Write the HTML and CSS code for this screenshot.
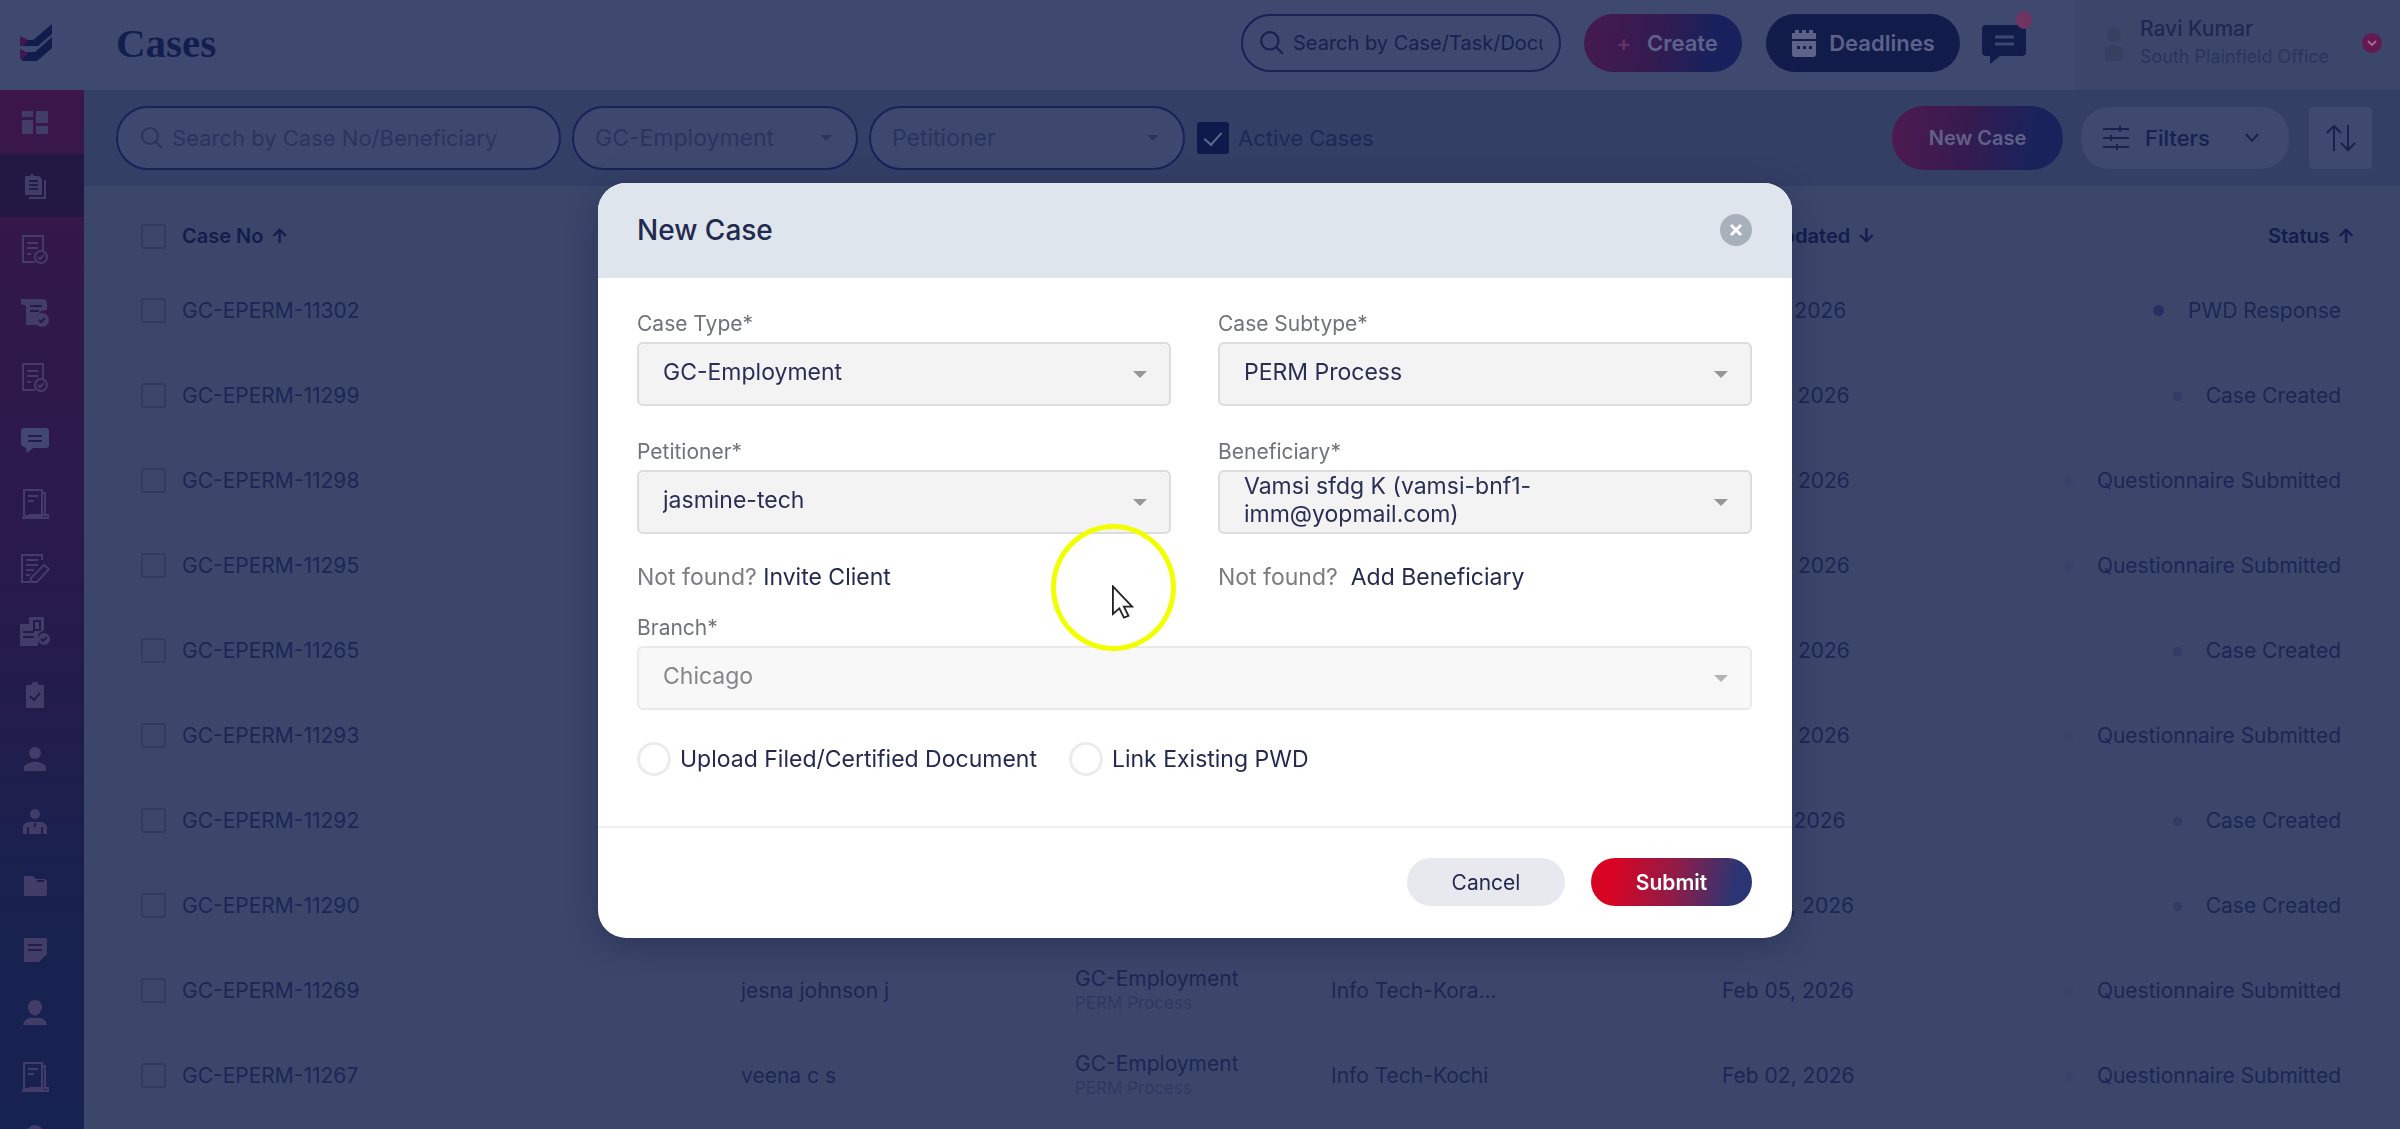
FILE: index.html
```html
<!DOCTYPE html>
<html lang="en">
<head>
    <meta charset="UTF-8">
    <meta name="viewport" content="width=device-width, initial-scale=1.0">
    <title>Cases</title>
    <link rel="stylesheet" href="styles.css">
</head>
<body>
    <!-- shared icons -->
    <svg class="sprite" aria-hidden="true">
        <symbol id="i-search" viewBox="0 0 24 24"><circle cx="10" cy="10" r="8"/><path d="M16 16l6 6"/></symbol>
        <symbol id="i-report" viewBox="0 0 28 32"><path d="M3 2h18v26H3zM21 5h3v23M1 30h26v-3H8M7 8h10M7 13h6"/></symbol>
        <symbol id="i-doccheck" viewBox="0 0 28 32"><path d="M14 29H2V3h20v15M6 10h11M6 15h11M6 21h4"/><circle cx="20" cy="24" r="6"/><path d="M17 24l2 2 4-4"/></symbol>
    </svg>

    <header class="topbar">
        <a class="logo" href="#" aria-label="Home">
            <svg width="32" height="38" viewBox="0 0 32 38">
                <path fill="#111c4b" d="M4 16h9L32 0v10L18 22H0zM4 28h11L32 13v11L17 37H3l-3-3z"/>
                <path fill="#40164f" d="M0 12l8 4-4 6H0zM0 25l8 4-5 6-3-1z"/>
            </svg>
        </a>
        <h1>Cases</h1>
        <label class="pill global-search">
            <svg class="line" width="26" height="26"><use href="#i-search"/></svg>
            <input type="text" aria-label="Search" placeholder="Search by Case/Task/Document">
        </label>
        <button class="btn create"><span class="plus">+</span>Create</button>
        <button class="btn deadlines">
            <svg width="26" height="28" viewBox="0 0 26 28" fill="currentColor"><path d="M4 1h4v3h3V1h4v3h3V1h4v3h3v6H1V4h3zM1 12h24v13q0 3-3 3H4q-3 0-3-3zm5 5v3h3v-3zm6 0v3h3v-3zm6 0v3h3v-3z" fill-rule="evenodd"/></svg>
            Deadlines
        </button>
        <button class="chat" aria-label="Messages">
            <svg width="44" height="40" viewBox="0 0 44 40"><path fill="#111c4b" d="M4 0h36q4 0 4 4v23q0 4-4 4H18L8 39v-8H4q-4 0-4-4V4q0-4 4-4z"/><path stroke="#3f496f" stroke-width="3" d="M13 12h19M13 19h19"/></svg>
            <span class="dot"></span>
        </button>
        <div class="profile">
            <svg width="40" height="44" viewBox="0 0 40 44" fill="#36415f"><circle cx="22" cy="14" r="7"/><path d="M13 40V28q9-8 18 0v12z"/></svg>
            <div class="who">
                <strong>Ravi Kumar</strong>
                <span>South Plainfield Office</span>
            </div>
            <button class="profile-toggle" aria-label="Account menu">
                <svg width="10" height="6" viewBox="0 0 10 6"><path d="M1 1l4 4 4-4" fill="none" stroke="#a5678f" stroke-width="2"/></svg>
            </button>
        </div>
    </header>

    <div class="shell">
        <nav class="sidebar">
            <a href="#" aria-label="Dashboard"><svg class="solid" width="28" height="28" viewBox="0 0 28 28"><path d="M1 3h11v6H1zM1 12h11v14H1zM15 3h12v12H15zM15 18h12v8H15z"/></svg></a>
            <a href="#" class="active" aria-label="Cases"><svg class="solid" width="24" height="28" viewBox="0 0 24 28"><path d="M2 4h5l2-3 2 3h5l3 3v16H2z"/><path class="cut" d="M6 9h9M6 13h9M6 17h9"/><path class="edge" d="M22 8v18H6"/></svg></a>
            <a href="#" aria-label="Tasks"><svg class="line" width="28" height="32"><use href="#i-doccheck"/></svg></a>
            <a href="#" aria-label="Petitions"><svg class="solid" width="28" height="32" viewBox="0 0 28 32"><path d="M0 2h22q4 0 4 5v6l-6 1-5 6 1 8H5V9L0 7z"/><circle cx="21" cy="23" r="7"/><path class="cut" d="M9 9h12M9 14h9M18 23l2 2 4-4"/></svg></a>
            <a href="#" aria-label="Approvals"><svg class="line" width="28" height="32"><use href="#i-doccheck"/></svg></a>
            <a href="#" aria-label="Messages"><svg class="solid bright" width="28" height="26" viewBox="0 0 28 26"><path d="M3 1h22q3 0 3 3v14q0 3-3 3H12l-6 5-1-5-5-3V4q0-3 3-3z"/><path class="cut" d="M7 9h14M7 14h14"/></svg></a>
            <a href="#" aria-label="Reports"><svg class="line" width="28" height="32"><use href="#i-report"/></svg></a>
            <a href="#" aria-label="Drafts"><svg class="line" width="30" height="32" viewBox="0 0 30 32"><path d="M22 8V3H2v27h15l12-13-5-4-13 13-1 4M6 8h12M6 13h12M6 18h8M6 23h4"/></svg></a>
            <a href="#" aria-label="Verification"><svg class="solid" width="32" height="32" viewBox="0 0 32 32"><path d="M10 2h15v13l-6 4v12H1V9h9z"/><circle cx="25" cy="24" r="6"/><path class="cut" d="M15 6h6v9h-6zM4 17h11M4 22h11M22 24l2 2 4-4"/></svg></a>
            <a href="#" aria-label="Checklist"><svg class="solid" width="22" height="26" viewBox="0 0 22 26"><path d="M2 3h5l2-3h4l2 3h5v23H2z"/><path class="cut" d="M6 14l4 4 6-7"/></svg></a>
            <a href="#" aria-label="Clients"><svg class="solid" width="24" height="26" viewBox="0 0 24 26"><circle cx="12" cy="7" r="6"/><path d="M1 25v-5q11-9 22 0v5z"/></svg></a>
            <a href="#" aria-label="Staff"><svg class="solid" width="24" height="26" viewBox="0 0 24 26"><circle cx="12" cy="5" r="5"/><path d="M0 25v-7q1-5 7-5h10q6 0 7 5v7z"/><path class="cut" d="M5 18v7M12 14v4M19 18v7"/></svg></a>
            <a href="#" aria-label="Files"><svg class="solid" width="24" height="22" viewBox="0 0 24 22"><path d="M1 1h9l3 3h8q3 0 3 3v12q0 2-2 2H1z"/><path class="cut" d="M14 6h7"/></svg></a>
            <a href="#" aria-label="Notes"><svg class="solid" width="24" height="26" viewBox="0 0 24 26"><path d="M1 1h23v16l-8 8H1z"/><path class="cut" d="M5 8h14M5 13h14"/></svg></a>
            <a href="#" aria-label="Users"><svg class="solid" width="24" height="28" viewBox="0 0 24 28"><path d="M5 9q0-8 7-8t7 8l-2 5-5 3-5-3z"/><path d="M0 26q2-9 12-7 10-2 12 7z"/></svg></a>
            <a href="#" aria-label="Billing"><svg class="line" width="28" height="32"><use href="#i-report"/></svg></a>
            <a href="#" class="last" aria-label="Settings"><svg class="solid" width="24" height="20" viewBox="0 0 24 20"><circle cx="12" cy="25" r="9"/></svg></a>
        </nav>

        <main>
            <div class="toolbar">
                <label class="pill case-search">
                    <svg class="line" width="24" height="24"><use href="#i-search"/></svg>
                    <input type="text" aria-label="Search cases" placeholder="Search by Case No/Beneficiary">
                </label>
                <div class="pill drop type-filter">
                    <select aria-label="Case type"><option>GC-Employment</option></select>
                </div>
                <div class="pill drop petitioner-filter">
                    <select aria-label="Petitioner"><option>Petitioner</option></select>
                </div>
                <label class="active-cases"><input type="checkbox" checked>Active Cases</label>
                <button class="btn new-case">New Case</button>
                <button class="filters">
                    <svg width="26" height="26" viewBox="0 0 26 26"><path d="M0 4h26M0 13h26M0 22h26M17 1v6M8 10v6M14 19v6"/></svg>
                    Filters
                    <svg class="chev" width="14" height="10" viewBox="0 0 14 10"><path d="M1 1l6 7 6-7"/></svg>
                </button>
                <button class="sort" aria-label="Sort">
                    <svg width="30" height="28" viewBox="0 0 30 28"><path d="M8 27V2M1 9l7-7 7 7M22 1v25M15 19l7 7 7-7"/></svg>
                </button>
            </div>

            <table>
                <thead>
                    <tr>
                        <th class="check"><input type="checkbox" aria-label="Select all"></th>
                        <th class="no">Case No <b>↑</b></th>
                        <th class="name"></th>
                        <th class="type"></th>
                        <th class="client"></th>
                        <th class="date">Last Updated <b>↓</b></th>
                        <th class="status">Status <b>↑</b></th>
                    </tr>
                </thead>
                <tbody>
                    <tr><td class="check"><input type="checkbox" aria-label="Select case"></td><td>GC-EPERM-11302</td><td></td><td></td><td></td><td>Feb 17, 2026</td><td class="status"><i class="strong"></i>PWD Response</td></tr>
                    <tr><td class="check"><input type="checkbox" aria-label="Select case"></td><td>GC-EPERM-11299</td><td></td><td></td><td></td><td>Feb 13, 2026</td><td class="status"><i></i>Case Created</td></tr>
                    <tr><td class="check"><input type="checkbox" aria-label="Select case"></td><td>GC-EPERM-11298</td><td></td><td></td><td></td><td>Feb 12, 2026</td><td class="status"><i class="faint"></i>Questionnaire Submitted</td></tr>
                    <tr><td class="check"><input type="checkbox" aria-label="Select case"></td><td>GC-EPERM-11295</td><td></td><td></td><td></td><td>Feb 12, 2026</td><td class="status"><i class="faint"></i>Questionnaire Submitted</td></tr>
                    <tr><td class="check"><input type="checkbox" aria-label="Select case"></td><td>GC-EPERM-11265</td><td></td><td></td><td></td><td>Feb 12, 2026</td><td class="status"><i></i>Case Created</td></tr>
                    <tr><td class="check"><input type="checkbox" aria-label="Select case"></td><td>GC-EPERM-11293</td><td></td><td></td><td></td><td>Feb 12, 2026</td><td class="status"><i class="faint"></i>Questionnaire Submitted</td></tr>
                    <tr><td class="check"><input type="checkbox" aria-label="Select case"></td><td>GC-EPERM-11292</td><td></td><td></td><td></td><td>Feb 11, 2026</td><td class="status"><i></i>Case Created</td></tr>
                    <tr><td class="check"><input type="checkbox" aria-label="Select case"></td><td>GC-EPERM-11290</td><td></td><td></td><td></td><td>Feb 06, 2026</td><td class="status"><i></i>Case Created</td></tr>
                    <tr><td class="check"><input type="checkbox" aria-label="Select case"></td><td>GC-EPERM-11269</td><td class="name">jesna johnson j</td><td>GC-Employment<small>PERM Process</small></td><td>Info Tech-Kora...</td><td>Feb 05, 2026</td><td class="status"><i class="faint"></i>Questionnaire Submitted</td></tr>
                    <tr><td class="check"><input type="checkbox" aria-label="Select case"></td><td>GC-EPERM-11267</td><td class="name">veena c s</td><td>GC-Employment<small>PERM Process</small></td><td>Info Tech-Kochi</td><td>Feb 02, 2026</td><td class="status"><i class="faint"></i>Questionnaire Submitted</td></tr>
                </tbody>
            </table>
        </main>
    </div>

    <div class="overlay">
        <form class="modal" role="dialog" aria-labelledby="modal-title">
            <div class="modal-head">
                <h2 id="modal-title">New Case</h2>
                <button type="button" class="close" aria-label="Close">
                    <svg width="14" height="14" viewBox="0 0 14 14"><path d="M2 2l10 10M12 2L2 12" stroke="#fff" stroke-width="3"/></svg>
                </button>
            </div>
            <div class="modal-body">
                <div class="grid">
                    <div class="field">
                        <label for="case-type">Case Type*</label>
                        <div class="drop"><select id="case-type"><option>GC-Employment</option></select></div>
                    </div>
                    <div class="field">
                        <label for="subtype">Case Subtype*</label>
                        <div class="drop"><select id="subtype"><option>PERM Process</option></select></div>
                    </div>
                    <div class="field">
                        <label for="petitioner">Petitioner*</label>
                        <div class="drop"><select id="petitioner"><option>jasmine-tech</option></select></div>
                        <p>Not found? <a href="#">Invite Client</a></p>
                    </div>
                    <div class="field">
                        <label for="beneficiary">Beneficiary*</label>
                        <div class="drop"><select id="beneficiary" class="two-line"><option>Vamsi sfdg K (vamsi-bnf1-imm@yopmail.com)</option></select></div>
                        <p>Not found? &nbsp;<a href="#">Add Beneficiary</a></p>
                    </div>
                </div>
                <div class="field branch">
                    <label for="branch">Branch*</label>
                    <div class="drop"><select id="branch" disabled><option>Chicago</option></select></div>
                </div>
                <div class="radios">
                    <label><input type="radio" name="doc">Upload Filed/Certified Document</label>
                    <label><input type="radio" name="doc">Link Existing PWD</label>
                </div>
            </div>
            <div class="modal-foot">
                <button type="button" class="cancel">Cancel</button>
                <button type="submit" class="submit">Submit</button>
            </div>
            <div class="pointer" aria-hidden="true">
                <svg width="22" height="34" viewBox="0 0 24 36"><path d="M1 1v30l7-6 5 10 5-2-5-10h9z" fill="#fff" stroke="#222" stroke-width="2"/></svg>
            </div>
        </form>
    </div>
</body>
</html>
```
FILE: styles.css
```css
* {
    box-sizing: border-box;
}
body {
    margin: 0;
    height: 100vh;
    display: flex;
    flex-direction: column;
    overflow: hidden;
    background: #3c466b;
    color: #16214f;
    font-family: Inter, "Liberation Sans", sans-serif;
    font-size: 21px;
}
button, input, select {
    font: inherit;
    color: inherit;
    margin: 0;
}
button {
    border: 0;
    padding: 0;
    background: none;
    cursor: pointer;
}
a {
    text-decoration: none;
}
.sprite {
    position: absolute;
    width: 0;
    height: 0;
}

/* top bar */
.topbar {
    flex: 0 0 90px;
    display: flex;
    align-items: center;
    padding-bottom: 5px;
    background: #3f496f;
}
.logo {
    width: 84px;
    padding-left: 20px;
}
.logo svg {
    display: block;
}
h1 {
    margin: 0 auto 0 32px;
    font-family: "Liberation Serif", serif;
    font-size: 41px;
    line-height: 48px;
    color: #131e50;
}
.pill {
    display: flex;
    align-items: center;
    border: 2px solid #17225a;
    border-radius: 32px;
}
.pill svg {
    flex: none;
    fill: none;
    stroke: currentColor;
    stroke-width: 2px;
}
.pill input, .pill select {
    width: 100%;
    min-width: 0;
    border: 0;
    outline: 0;
    padding: 0;
    background: none;
    appearance: none;
}
.pill input::placeholder {
    color: inherit;
    opacity: 1;
}
.global-search {
    width: 320px;
    height: 58px;
    padding: 0 16px;
    gap: 8px;
    font-size: 20px;
}
.btn {
    border-radius: 32px;
    color: #5e6289;
    font-weight: 600;
}
.topbar .btn {
    height: 58px;
    font-size: 22px;
}
.create {
    width: 158px;
    margin: 0 24px 0 23px;
    padding-left: 8px;
    background: linear-gradient(100deg, #421a50 10%, #341b50 45%, #18215c 80%);
}
.plus {
    margin-right: 16px;
    color: #6a3063;
}
.deadlines {
    width: 194px;
    display: flex;
    align-items: center;
    justify-content: center;
    gap: 12px;
    background: #111c4b;
}
.chat {
    position: relative;
    margin: 0 48px 0 22px;
    height: 36px;
}
.dot {
    position: absolute;
    top: -14px;
    right: -6px;
    width: 16px;
    height: 18px;
    border-radius: 50%;
    background: #71335f;
}
.profile {
    display: flex;
    align-items: center;
    align-self: stretch;
    width: 326px;
    padding: 0 18px;
    margin-bottom: -5px;
    padding-bottom: 5px;
    background: #3c466a;
}
.who {
    flex: 1;
    padding-left: 8px;
    white-space: nowrap;
}
.who strong, .who span {
    display: block;
    line-height: 28px;
}
.who strong {
    font-weight: 500;
    color: #1d2854;
}
.who span {
    font-size: 18px;
    color: #29345d;
}
.profile-toggle {
    display: grid;
    place-items: center;
    width: 20px;
    height: 20px;
    border-radius: 50%;
    background: #64194f;
}

/* side menu */
.shell {
    flex: 1;
    min-height: 0;
    display: flex;
}
.sidebar {
    flex: 0 0 84px;
    display: flex;
    flex-direction: column;
    overflow: hidden;
    background: linear-gradient(#3c164b, #30184a 22%, #2a194b 42%, #221c4b 58%, #18214e 78%, #162251);
}
.sidebar a {
    flex: 1;
    display: flex;
    align-items: center;
    justify-content: center;
    padding-right: 14px;
}
.sidebar a.active {
    background: #231744;
}
.sidebar a.last {
    flex: 0 0 20px;
}
.sidebar .line {
    fill: none;
    stroke: #433c69;
    stroke-width: 2px;
}
.sidebar .solid {
    fill: #423c69;
}
.sidebar .bright {
    fill: #414770;
}
.sidebar .cut {
    fill: none;
    stroke: #251b49;
    stroke-width: 2px;
}
.sidebar .edge {
    fill: none;
    stroke: #423c69;
    stroke-width: 2px;
}

/* filters row */
main {
    flex: 1;
    min-width: 0;
}
.toolbar {
    display: flex;
    align-items: center;
    height: 96px;
    padding: 0 28px 0 32px;
    background: #343f66;
}
.toolbar .pill {
    height: 64px;
    background: #3e486e;
    color: #29345f;
    font-size: 22px;
}
.case-search {
    width: 445px;
    padding: 0 22px;
    gap: 8px;
}
.drop {
    position: relative;
}
.drop::after {
    content: "";
    position: absolute;
    right: 24px;
    top: 29px;
    border: 7px solid transparent;
    border-top-color: currentColor;
    border-bottom: 0;
    pointer-events: none;
}
.toolbar .drop {
    margin-left: 11px;
    padding: 0 21px;
    font-size: 23px;
}
.toolbar .drop::after {
    top: 27px;
    border-width: 6px 6px 0;
}
.type-filter {
    width: 286px;
}
.petitioner-filter {
    width: 316px;
}
input[type="checkbox"] {
    appearance: none;
    display: block;
    width: 25px;
    height: 25px;
    border: 2px solid #303b63;
    border-radius: 3px;
}
.active-cases {
    display: flex;
    align-items: center;
    gap: 9px;
    margin: 0 auto 0 12px;
    font-size: 22px;
    color: #1d2857;
}
.active-cases input[type="checkbox"] {
    display: grid;
    place-items: center;
    width: 32px;
    height: 32px;
    border: 0;
    background: #0e1a4b;
}
.active-cases input::before {
    content: "";
    width: 8px;
    height: 15px;
    margin-top: -4px;
    border: solid #5f688c;
    border-width: 0 2px 2px 0;
    transform: rotate(42deg);
}
.new-case {
    width: 171px;
    height: 64px;
    font-size: 20px;
    background: linear-gradient(100deg, #4a1a50 8%, #351b50 45%, #1a225c 80%);
}
.filters {
    display: flex;
    align-items: center;
    width: 208px;
    height: 62px;
    margin: 0 20px 0 18px;
    padding: 0 30px 0 22px;
    gap: 16px;
    border-radius: 28px;
    background: #3f4970;
    font-size: 22px;
    font-weight: 500;
}
.filters svg, .sort svg {
    fill: none;
    stroke: #17224f;
    stroke-width: 2px;
}
.filters .chev {
    margin-left: auto;
}
.sort {
    display: grid;
    place-items: center;
    width: 63px;
    height: 62px;
    border-radius: 4px;
    background: #3f4970;
}

/* cases table */
table {
    width: 100%;
    border-collapse: collapse;
    table-layout: fixed;
    color: #1b2655;
}
th {
    height: 82px;
    font-weight: 600;
    font-size: 20px;
    color: #121d4c;
}
th b {
    font-weight: 700;
    margin-left: 2px;
}
td {
    height: 85px;
}
th, td {
    padding: 0;
    text-align: left;
    white-space: nowrap;
}
thead th {
    padding-top: 18px;
}
th.check {
    width: 98px;
}
.check {
    padding-left: 57px;
}
th.no {
    width: 559px;
}
th.name {
    width: 334px;
}
th.type {
    width: 256px;
}
th.client {
    width: 391px;
}
th.date {
    width: 240px;
}
td.status {
    padding-right: 59px;
    text-align: right;
}
th.status {
    padding-right: 45px;
    text-align: right;
}
.status i {
    display: inline-block;
    width: 9px;
    height: 9px;
    margin-right: 24px;
    border-radius: 50%;
    background: #303b66;
    vertical-align: 2px;
}
.status .strong {
    width: 11px;
    height: 11px;
    background: #26315f;
}
.status .faint {
    background: #37426a;
}
td small {
    display: block;
    font-size: 17px;
    line-height: 24px;
    color: #2e3962;
}

/* dialog */
.overlay {
    position: fixed;
    inset: 0;
    display: flex;
    align-items: flex-start;
    justify-content: center;
    padding: 183px 10px 0 0;
}
.modal {
    position: relative;
    width: 1194px;
    max-width: 90%;
    border-radius: 28px;
    background: #fff;
    box-shadow: 0 8px 32px rgba(20, 28, 66, 0.4);
    color: #23294f;
    font-size: 23px;
}
.modal-head {
    display: flex;
    align-items: center;
    justify-content: space-between;
    height: 95px;
    padding: 0 40px 2px 39px;
    border-radius: 28px 28px 0 0;
    background: #dfe5ed;
}
h2 {
    margin: 0;
    font-size: 28px;
    font-weight: 500;
    line-height: 36px;
}
.close {
    display: grid;
    place-items: center;
    width: 32px;
    height: 32px;
    border-radius: 50%;
    background: #a7b0bb;
}
.modal-body {
    padding: 32px 40px 50px 39px;
    border-bottom: 2px solid #f0f0f1;
}
.grid {
    display: grid;
    grid-template-columns: 1fr 1fr;
    gap: 32px 47px;
}
.field > label {
    display: block;
    height: 32px;
    font-size: 21px;
    line-height: 28px;
    color: #70727a;
}
.field .drop {
    color: #969696;
}
.field .drop:has(:disabled) {
    color: #b4b4b4;
}
.field select {
    display: block;
    width: 100%;
    height: 64px;
    padding: 0 200px 4px 24px;
    border: 2px solid #dcdcdc;
    border-radius: 6px;
    background: #f3f3f3;
    color: #292e54;
    line-height: 28px;
    appearance: none;
}
.field select.two-line {
    white-space: normal;
}
.field select:disabled {
    border-color: #e9e9e9;
    background: #f8f8f8;
    color: #868688;
    opacity: 1;
}
.field p {
    margin: 29px 0 0;
    line-height: 28px;
    color: #7c7c80;
}
.field a {
    color: #23294f;
}
.branch {
    margin-top: 23px;
}
.radios {
    display: flex;
    gap: 32px;
    margin-top: 32px;
}
.radios label {
    display: flex;
    align-items: center;
    gap: 9px;
    height: 34px;
}
.radios input {
    appearance: none;
    width: 34px;
    height: 34px;
    border: 3px solid #ececee;
    border-radius: 50%;
}
.modal-foot {
    display: flex;
    justify-content: flex-end;
    gap: 26px;
    padding: 30px 40px 32px;
}
.modal-foot button {
    width: 158px;
    height: 48px;
    border-radius: 24px;
    font-size: 21px;
}
.modal-foot .cancel {
    background: #e8e8ef;
}
.modal-foot .submit {
    width: 161px;
    background: linear-gradient(100deg, #d80424 15%, #8f1c48 52%, #2b3574 88%);
    color: #fff;
    font-weight: 600;
}
.pointer {
    position: absolute;
    left: 453px;
    top: 341px;
    width: 125px;
    height: 127px;
    padding: 56px 0 0 56px;
    border: 5px solid #f2ff00;
    border-radius: 50%;
    pointer-events: none;
}
.pointer svg {
    display: block;
}
```
